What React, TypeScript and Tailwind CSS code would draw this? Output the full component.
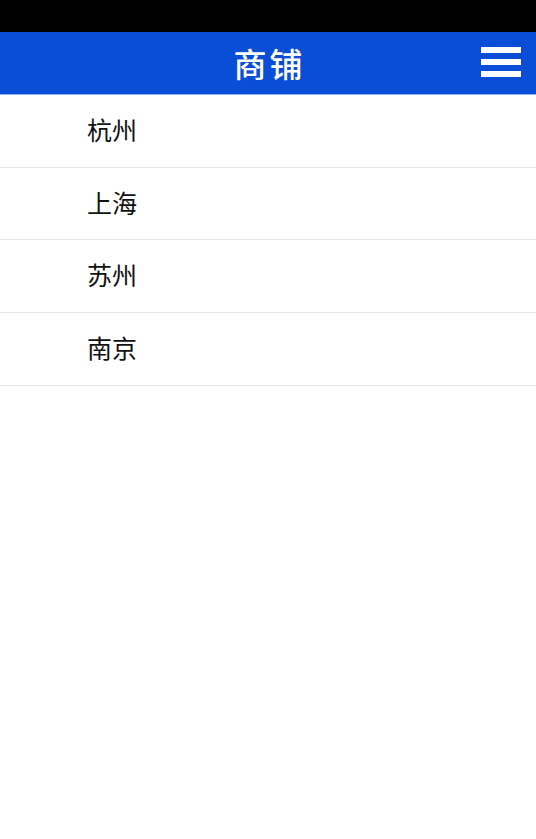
const cities = ['杭州', '上海', '苏州', '南京'];

export default function App() {
  return (
    <div
      className="min-h-screen bg-white"
      style={{ fontFamily: '"Noto Sans CJK SC", "Noto Sans", sans-serif' }}
    >
      <div className="h-8 bg-black" />
      <header className="relative flex h-[63px] items-center justify-center border-b border-[#8fb2f2] bg-[#0a4dd6]">
        <h1 className="pl-[3px] text-[33px] font-medium leading-none tracking-[3px] text-white">商铺</h1>
        <button className="absolute right-[15px] top-[15px] flex flex-col gap-[6px]">
          <span className="block h-[6px] w-[40px] bg-white" />
          <span className="block h-[6px] w-[40px] bg-white" />
          <span className="block h-[6px] w-[40px] bg-white" />
        </button>
      </header>
      <ul>
        {cities.map((c) => (
          <li
            key={c}
            className="flex h-[72.7px] items-center border-b border-[#e8e8e8] pb-[2px] pl-[87px] text-[25px] text-[#111]"
          >
            {c}
          </li>
        ))}
      </ul>
    </div>
  );
}
